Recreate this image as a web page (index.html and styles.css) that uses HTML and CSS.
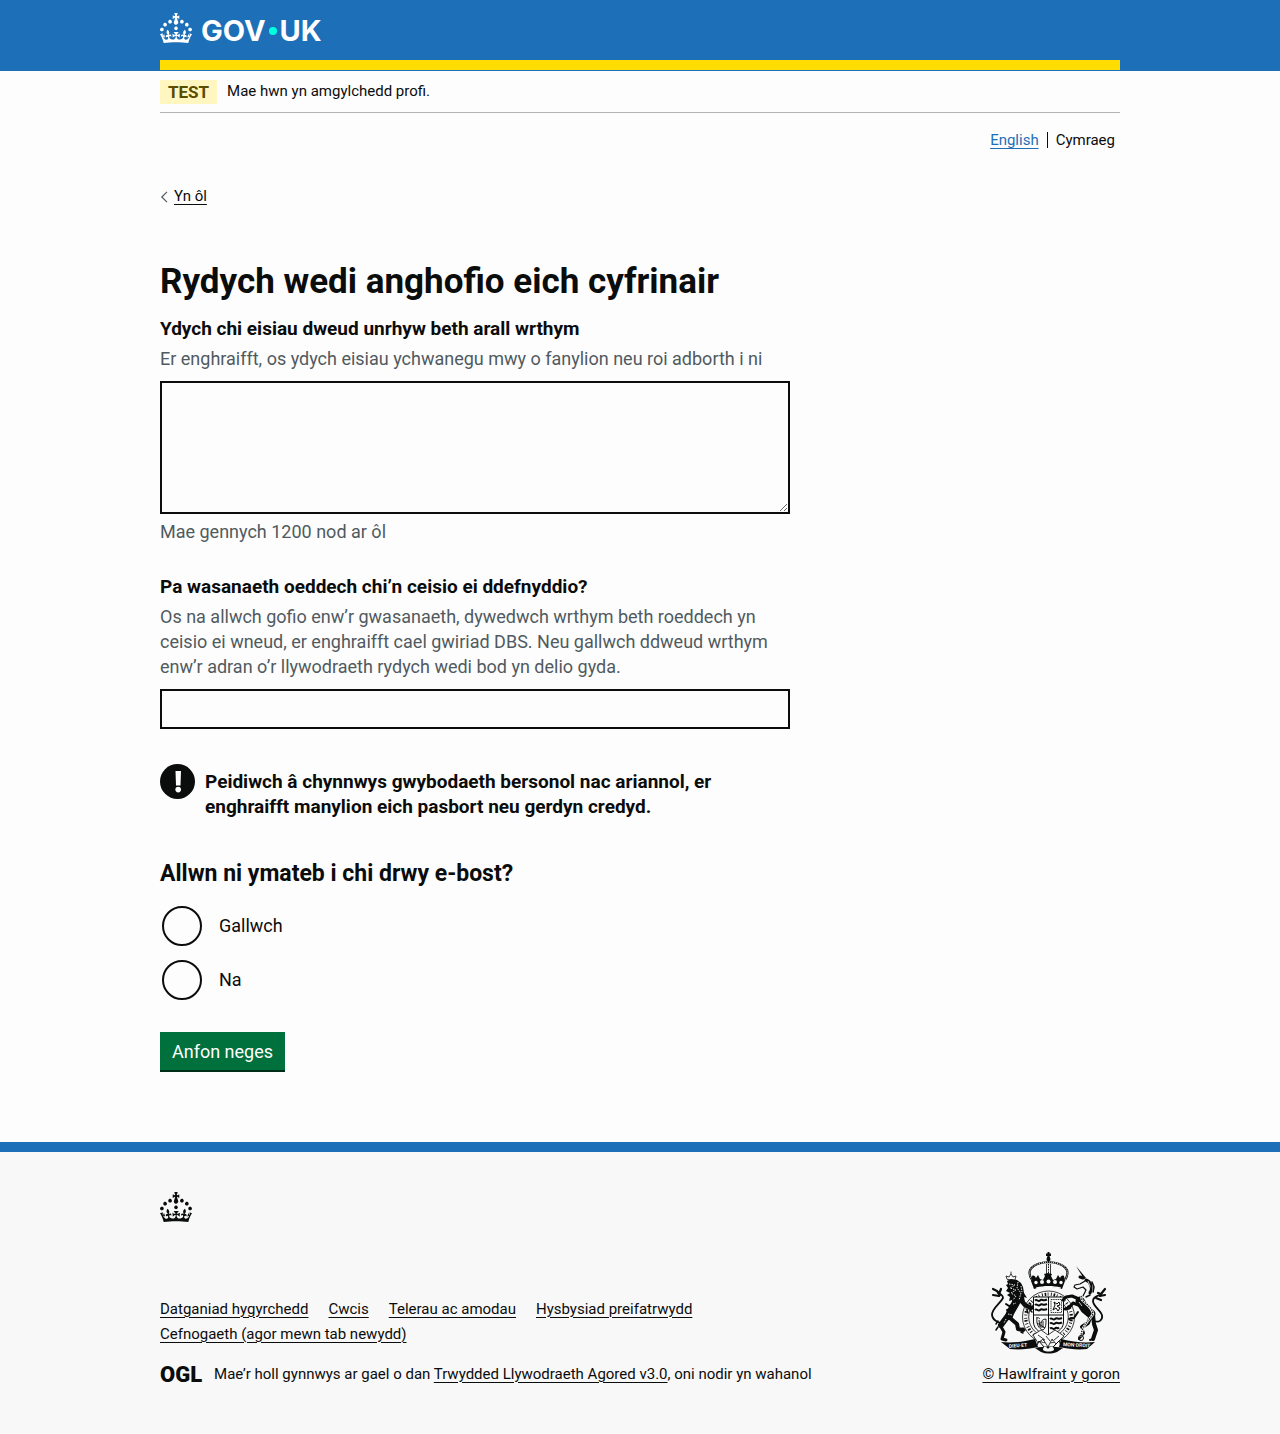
FILE: index.html
```html
<!DOCTYPE html>
<html lang="cy">
<head>
<meta charset="utf-8">
<meta name="viewport" content="width=device-width, initial-scale=1">
<title>Rydych wedi anghofio eich cyfrinair - GOV.UK</title>
<link rel="stylesheet" href="styles.css">
</head>
<body>
<svg width="0" height="0" class="sprite" aria-hidden="true">
  <symbol id="crown" viewBox="0 0 32 30">
    <path d="M22.6 10.4c-1 .4-2-.1-2.4-1-.4-.9.1-2 1-2.4.9-.4 2 .1 2.4 1s-.1 2-1 2.4m-5.9 6.7c-.9.4-2-.1-2.4-1-.4-.9.1-2 1-2.4.9-.4 2 .1 2.4 1s-.1 2-1 2.4m10.8-3.7c-1 .4-2-.1-2.4-1-.4-.9.1-2 1-2.4.9-.4 2 .1 2.4 1s0 2-1 2.4m3.3 4.8c-1 .4-2-.1-2.4-1-.4-.9.1-2 1-2.4.9-.4 2 .1 2.4 1s-.1 2-1 2.4M17 4.7l2.3 1.2V2.5l-2.3.7-.2-.2.9-3h-3.4l.9 3-.2.2c-.1.1-2.3-.7-2.3-.7v3.4L15 4.7c.1.1.1.2.2.2l-1.3 4c-.1.2-.1.4-.1.6 0 1.1.8 2 1.9 2.2h.7c1-.2 1.9-1.1 1.9-2.1 0-.2 0-.4-.1-.6l-1.3-4c-.1-.2 0-.2.1-.3m-7.6 5.7c.9.4 2-.1 2.4-1 .4-.9-.1-2-1-2.4-.9-.4-2 .1-2.4 1s0 2 1 2.4m-5 3c.9.4 2-.1 2.4-1 .4-.9-.1-2-1-2.4-.9-.4-2 .1-2.4 1s.1 2 1 2.4m-3.2 4.8c.9.4 2-.1 2.4-1 .4-.9-.1-2-1-2.4-.9-.4-2 .1-2.4 1s0 2 1 2.4m14.8 11c4.4 0 8.6.3 12.3.8 1.1-4.5 2.4-7 3.7-8.8l-2.5-.9c.2 1.3.3 1.9 0 2.7-.4-.4-.8-1.1-1.1-2.3l-1.2 4c.7-.5 1.3-.8 2-.9-1.1 2.5-2.6 3.1-3.5 3-1.1-.2-1.7-1.2-1.5-2.1.3-1.2 1.5-1.5 2.1-.1 1.1-2.3-.8-3-2-2.3 1.9-1.9 2.1-3.5.6-5.6-2.1 1.6-2.1 3.2-1.2 5.5-1.2-1.4-3.2-.6-2.5 1.6.9-1.4 2.1-.5 1.9.8-.2 1.1-1.7 2.1-3.5 1.9-2.7-.2-2.9-2.1-2.9-3.6.7-.1 1.9.5 2.9 1.9l.4-4.3c-1.1 1.1-2.1 1.4-3.2 1.4.4-1.2 2.1-3 2.1-3h-5.4s1.7 1.9 2.1 3c-1.1 0-2.1-.2-3.2-1.4l.4 4.3c1-1.4 2.2-2 2.9-1.9-.1 1.5-.2 3.4-2.9 3.6-1.9.2-3.4-.8-3.5-1.9-.2-1.3 1-2.2 1.9-.8.7-2.3-1.2-3-2.5-1.6.9-2.2.9-3.9-1.2-5.5-1.5 2-1.3 3.7.6 5.6-1.2-.7-3.1 0-2 2.3.6-1.4 1.8-1.1 2.1.1.2.9-.3 1.9-1.5 2.1-.9.2-2.4-.5-3.5-3 .6 0 1.2.3 2 .9l-1.2-4c-.3 1.1-.7 1.9-1.1 2.3-.3-.8-.2-1.4 0-2.7l-2.9.9C1.3 23 2.6 25.5 3.7 30c3.7-.5 7.9-.8 12.3-.8"/>
  </symbol>
</svg>

<header class="header">
  <div class="container">
    <a class="logo" href="#" aria-label="GOV.UK">
      <svg class="crown" aria-hidden="true"><use href="#crown"/></svg>
      <span class="logo-text">GOV<span class="logo-dot"></span>UK</span>
    </a>
    <div class="header-bar"></div>
  </div>
</header>

<div class="container">
  <div class="phase-banner">
    <strong class="tag">TEST</strong>
    <span>Mae hwn yn amgylchedd profi.</span>
  </div>
  <nav class="languages" aria-label="Iaith">
    <a href="#" lang="en">English</a>
    <span class="current" aria-current="true">Cymraeg</span>
  </nav>
  <a class="back-link" href="#"><svg width="8" height="12" viewBox="0 0 8 12" aria-hidden="true"><path d="M7 .8 1.800 6 7 11.200" fill="none" stroke="#505a5f" stroke-width="1.200"/></svg><span>Yn ôl</span></a>

  <main class="main">
    <h1>Rydych wedi anghofio eich cyfrinair</h1>
    <form>
      <div class="group">
        <label class="label" for="details">Ydych chi eisiau dweud unrhyw beth arall wrthym</label>
        <p class="hint" id="details-hint">Er enghraifft, os ydych eisiau ychwanegu mwy o fanylion neu roi adborth i ni</p>
        <textarea class="field textarea" id="details" name="details" aria-describedby="details-hint details-count"></textarea>
        <p class="count" id="details-count">Mae gennych 1200 nod ar ôl</p>
      </div>
      <div class="group">
        <label class="label" for="service">Pa wasanaeth oeddech chi’n ceisio ei ddefnyddio?</label>
        <p class="hint" id="service-hint">Os na allwch gofio enw’r gwasanaeth, dywedwch wrthym beth roeddech yn ceisio ei wneud, er enghraifft cael gwiriad DBS. Neu gallwch ddweud wrthym enw’r adran o’r llywodraeth rydych wedi bod yn delio gyda.</p>
        <input class="field" id="service" name="service" type="text" aria-describedby="service-hint">
      </div>
      <div class="warning">
        <svg width="35" height="35" viewBox="0 0 35 35" aria-hidden="true"><circle cx="17.500" cy="17.500" r="17.500" fill="#0b0c0c"/><path d="M15.500 7h5.500l-.5 14.500h-4.500z" fill="#fff"/><circle cx="18.200" cy="25.600" r="2.800" fill="#fff"/></svg>
        <strong>Peidiwch â chynnwys gwybodaeth bersonol nac ariannol, er enghraifft manylion eich pasbort neu gerdyn credyd.</strong>
      </div>
      <fieldset class="radios">
        <legend>Allwn ni ymateb i chi drwy e-bost?</legend>
        <div class="radio"><input type="radio" name="contact" id="contact-yes" value="yes"><label for="contact-yes">Gallwch</label></div>
        <div class="radio"><input type="radio" name="contact" id="contact-no" value="no"><label for="contact-no">Na</label></div>
      </fieldset>
      <button class="button" type="submit">Anfon neges</button>
    </form>
  </main>
</div>

<footer class="footer">
  <div class="container">
    <svg class="crown" aria-hidden="true"><use href="#crown"/></svg>
    <div class="footer-meta">
      <div class="footer-main">
        <ul class="footer-links">
          <li><a href="#">Datganiad hygyrchedd</a></li>
          <li><a href="#">Cwcis</a></li>
          <li><a href="#">Telerau ac amodau</a></li>
          <li><a href="#">Hysbysiad preifatrwydd</a></li>
          <li><a href="#">Cefnogaeth (agor mewn tab newydd)</a></li>
        </ul>
        <div class="licence">
          <span class="ogl" aria-hidden="true">OGL</span>
          <span>Mae’r holl gynnwys ar gael o dan <a href="#">Trwydded Llywodraeth Agored v3.0</a>, oni nodir yn wahanol</span>
        </div>
      </div>
      <a class="copyright" href="#">
        <svg class="crest" viewBox="0 0 117 102" aria-hidden="true">
          <!-- royal crown -->
          <path d="M57.500 0h2v1.500H61V4h-1.500l1 3-1 4h-2l-1-4 1-3H56V1.500h1.500z"/>
          <g fill="none" stroke="#0b0c0c">
            <path d="M42 28c-6-9-1-17 16.500-18C76 11 81 19 75 28" stroke-width="2.200"/>
            <path d="M42 28c-6-9-1-17 16.500-18C76 11 81 19 75 28" stroke="#f8f8f8" stroke-dasharray="1 1"/>
            <path d="M56.500 12v11M60.500 12v11" stroke-width=".8"/>
            <path d="M58.500 12v12" stroke-dasharray="1.500 1"/>
          </g>
          <path d="M42 24c2-1 3 0 4 2l2-3 2 4 3 1 2-4-1-2 4-1 4 1-1 2 2 4 3-1 2-4 2 3c1-2 2-3 4-2l1 5-3 8c-9-3-19-3-28 0l-3-8z"/>
          <g fill="#f8f8f8"><circle cx="46" cy="30.500" r="1.700"/><circle cx="52" cy="30" r="2"/><circle cx="58.500" cy="29.500" r="2"/><circle cx="65" cy="30" r="2"/><circle cx="71" cy="30.500" r="1.700"/><path d="M46 35.500c8-2 17-2 25 0l-.4 1.200c-8-2-16-2-24.200 0z"/></g>
          <!-- garter -->
          <circle cx="58.500" cy="65" r="26" fill="#f8f8f8" stroke="#0b0c0c" stroke-width=".8"/>
          <circle cx="58.500" cy="65" r="22.800" fill="none" stroke="#0b0c0c" stroke-width="3.200" stroke-dasharray=".9 1.800 1.600 1.500 .8 2.500"/>
          <circle cx="58.500" cy="65" r="19.800" fill="#f8f8f8" stroke="#0b0c0c" stroke-width=".8"/>
          <!-- shield -->
          <path d="M43.500 45h30v25c0 8-8 11-15 14-7-3-15-6-15-14z" fill="#f8f8f8" stroke="#0b0c0c"/>
          <path d="M58.500 45v38M43.500 63h30" stroke="#0b0c0c"/>
          <g fill="none" stroke="#0b0c0c">
            <path d="M45 48.500c2-2 3 2 5 0s3 1 7-1M45 53c2-2 3 2 5 0s3 1 7-1M45 58c2-2 3 2 5 0s3 1 7-1M60 67c2-2 3 2 5 0s3 1 7-1M60 71.500c2-2 3 2 5 0s3 1 7-1M60 76.500c2-2 3 2 5 0s2 1 4-1" stroke-width="2"/>
            <path d="M61 47.500h10.500v13H61z" stroke-width=".8" stroke-dasharray="1.500 .7"/>
            <path d="M64 50l3 2 2-2 1 3-3 1 3 2-2 3-2-3-3 2 2-5z"/>
            <path d="M46 66c2-1 3 0 4 1M47 66c-1 6 2 11 6 12 3-2 3-6 3-11-3 0-5 2-5 4M49 68l1 7M51 70v6M53 69v7M47 71l8 5" stroke-width=".9"/>
          </g>
          <!-- lion -->
          <g fill="none" stroke="#0b0c0c" stroke-linecap="round" stroke-linejoin="round">
            <path d="M17 27l-1-3 3 1 2-3 2 3 3-1-1 4zM21 22v-2" stroke-width=".8"/>
            <path d="M27 48c-2 6-6 9-8 16" stroke-width="8"/>
            <path d="M30 47l5 6 6 3" stroke-width="4.500"/>
            <path d="M40 54l3 1M40 58l2 2M37 58l1 3" stroke-width="1.500"/>
            <path d="M24 53l-5 1-3-2M22 57l-5 1" stroke-width="2"/>
            <path d="M17 65l-6 8" stroke-width="6"/>
            <path d="M10 73l4 7-2 7 4 1" stroke-width="3"/>
            <path d="M20 66l7 6 1 5 5 1" stroke-width="4"/>
            <path d="M33 76l2 2M31 80l2 1M8 69l-2 3M8 75l-2 3" stroke-width="1.500"/>
            <path d="M15 69c-4 4-12 0-13-6 0-7 8-11 11-17 0-3-2-4-5-5" stroke-width="1.800"/>
            <path d="M3 37l4 2 3 4M3 43l6 1M11 37l-2 5" stroke-width="2.200"/>
          </g>
          <path d="M17 29l4-2 6 1 4 3 2 4 1 6 3 5-3-1 1 5-4-2-1 4-4-3-3 3-1-4-3 1 1-4-3-2 3-2-4-2 2-3-2-3 2-1z"/>
          <g fill="none" stroke="#f8f8f8" stroke-width=".9" stroke-dasharray="1.500 1"><path d="M19 32l6 1-5 3 6 2-5 3 5 3-3 4M28 30l-1 6 4 5-2 7M31 34l1 6M23 52l3-1M18 62l4 1M16 67l-2 4"/></g>
          <!-- unicorn -->
          <path d="M86 14L96 26l-2 1z"/>
          <g fill="none" stroke="#0b0c0c" stroke-linecap="round" stroke-linejoin="round">
            <path d="M95 29l-5 3-5 1-1 2 3 2 6-2 3 3-3 6" stroke-width="1.200"/>
            <path d="M96 28c5 2 6 7 4 13M93 26l-3-1" stroke-width="3"/>
            <path d="M102 30l2 5-1 5M100 43l-4 2" stroke-width="1.500"/>
            <path d="M90 49l5 8 6 5" stroke-width="9"/>
            <path d="M89 47l-7-3-6 1M76 45l-3 3" stroke-width="3"/>
            <path d="M91 54l-8-3-4 5-4 1" stroke-width="3"/>
            <path d="M101 64l-3 7-6 4" stroke-width="4"/>
            <path d="M92 75l2 6-5 6" stroke-width="2"/>
            <path d="M103 63l1 9 2 6-3 9" stroke-width="4"/>
            <path d="M103 87l-3 1M88 60l-4 6-5 1" stroke-width="2"/>
            <path d="M104 69c5 2 9-1 8-6-2-5-9-9-9-14 0-4 4-5 7-6" stroke-width="1.800"/>
            <path d="M115 37l-4 5-3-1M115 43l-5 1M106 46l5 2" stroke-width="2.200"/>
          </g>
          <g fill="none">
            <path d="M91 44l1 4c5 5 10 7 11 14-5 8-12 13-12 23" stroke="#f8f8f8" stroke-width="2.400"/>
            <path d="M91 44l1 4c5 5 10 7 11 14-5 8-12 13-12 23" stroke="#0b0c0c" stroke-width="1.200" stroke-dasharray="1.500 1"/>
            <circle cx="91" cy="86" r="2.500" stroke="#0b0c0c"/>
            <path d="M98 29l2 5-1 5M89 50l3 4" stroke="#f8f8f8" stroke-width=".8"/>
          </g>
          <!-- buckle strap -->
          <path d="M43 83l8-5 7 5 7-5 9 6-8 8-4-5-4 8-5-8-5 4z" fill="#f8f8f8" stroke="#0b0c0c" stroke-width=".8"/>
          <path d="M48 83l7 5M56 84l4 5M64 88l5-4" fill="none" stroke="#0b0c0c" stroke-width=".8"/>
          <!-- motto scroll -->
          <path d="M11 90c11 1 22 0 34-3l3 8c-9 2-18 3-28 2zM71 87c12 3 22 4 34 3l-8 7c-9 1-18 0-28-2z"/>
          <path d="M45 96c9-2 19-2 28 0l-6 4c-6 2-11 2-16 0z"/>
          <path d="M53 98c0-4 3-4 5-1 2-3 6-3 6 1-3 2-8 2-11 0z" fill="#f8f8f8"/>
          <path d="M46 95l3-6 5 6M72 95l-3-6-6 6" fill="none" stroke="#0b0c0c"/>
          <g class="motto"><text x="19" y="96" transform="rotate(-5 19 96)">DIEU·ET</text><text x="73" y="94" transform="rotate(3 73 94)">MON·DROIT</text></g>
        </svg>
        <span>© Hawlfraint y goron</span>
      </a>
    </div>
  </div>
</footer>
</body>
</html>
```
FILE: styles.css
```css
* { box-sizing: border-box; }

body {
  margin: 0;
  background: #fdfdfd;
  color: #0b0c0c;
  font: 15px/25px Roboto, "Liberation Sans", sans-serif;
}

h1, p, ul, fieldset { margin: 0; padding: 0; }

a {
  color: inherit;
  text-decoration: underline;
  text-decoration-thickness: 1px;
  text-underline-offset: 3px;
}

.sprite { display: block; }

.container {
  max-width: 960px;
  margin: 0 auto;
}

.crown {
  display: block;
  width: 32px;
  height: 30px;
  fill: currentColor;
}

/* Header */
.header {
  padding-bottom: 1px;
  background: #1d70b8;
  color: #fff;
}

.logo {
  display: flex;
  align-items: center;
  gap: 9px;
  height: 60px;
  padding-bottom: 4px;
  text-decoration: none;
}

.logo-text {
  display: flex;
  align-items: center;
  padding-top: 6px;
  font: 700 29px/30px Inter, sans-serif;
}

.logo-dot {
  width: 8px;
  height: 8px;
  margin: 0 3px;
  border-radius: 50%;
  background: #00ffe0;
}

.header-bar {
  height: 10px;
  background: #ffdd00;
}

/* Phase banner and language switch */
.phase-banner {
  display: flex;
  align-items: center;
  gap: 10px;
  padding: 8px 0;
  border-bottom: 1px solid #b1b4b6;
}

.tag {
  padding: 0 8px;
  background: #fff7bf;
  color: #594d00;
  font-size: 17px;
  line-height: 24px;
}

.languages {
  display: flex;
  align-items: baseline;
  justify-content: flex-end;
  padding: 15px 5px 0 0;
}

.languages a { color: #1d70b8; }

.languages .current {
  margin-left: 8px;
  padding-left: 8px;
  border-left: 1px solid #0b0c0c;
  line-height: 16px;
}

.back-link {
  display: inline-flex;
  align-items: center;
  gap: 6px;
  margin-top: 31px;
  text-decoration: none;
}

.back-link span {
  text-decoration: underline;
  text-underline-offset: 3px;
}

/* Form */
.main {
  max-width: 630px;
  padding: 51px 0 70px;
  font-size: 18px;
}

h1 {
  margin-bottom: 14px;
  font-size: 35px;
  line-height: 40px;
}

.group { margin-bottom: 30px; }

.label {
  display: block;
  margin-bottom: 5px;
  font-size: 19px;
  font-weight: 700;
}

.hint, .count { color: #505a5f; }

.hint { margin-bottom: 10px; }

.count { margin-top: 5px; }

.field {
  display: block;
  width: 100%;
  height: 40px;
  padding: 5px;
  border: 2px solid #0b0c0c;
  border-radius: 0;
  background: #fdfdfd;
  color: inherit;
  font: inherit;
}

.textarea {
  height: 133px;
  resize: vertical;
}

.warning {
  display: flex;
  align-items: flex-start;
  gap: 10px;
  margin: 35px 0 40px;
  font-size: 19px;
}

.warning svg { flex: none; }

.warning strong { padding-top: 5px; }

.radios {
  border: 0;
  margin-bottom: 32px;
}

.radios legend {
  margin-bottom: 17px;
  padding: 0;
  font-size: 23px;
  font-weight: 700;
  line-height: 30px;
}

.radio {
  display: flex;
  align-items: center;
  gap: 17px;
  padding-left: 2px;
}

.radio + .radio { margin-top: 14px; }

.radio input {
  appearance: none;
  width: 40px;
  height: 40px;
  margin: 0;
  border: 2px solid #0b0c0c;
  border-radius: 50%;
}

.radio input:checked {
  background: radial-gradient(#0b0c0c 10px, transparent 11px);
}

.button {
  display: block;
  padding: 6px 12px 7px;
  border: 0;
  background: #00703c;
  box-shadow: inset 0 -2px 0 #002d18;
  color: #fff;
  font: inherit;
  line-height: 27px;
}

/* Footer */
.footer {
  padding: 40px 0 48px;
  border-top: 10px solid #1d70b8;
  background: #f8f8f8;
}

.footer-meta {
  display: flex;
  align-items: flex-end;
  justify-content: space-between;
  margin-top: 30px;
}

.footer-links {
  display: flex;
  flex-wrap: wrap;
  column-gap: 20px;
  max-width: 600px;
  margin-bottom: 15px;
  list-style: none;
}

.licence {
  display: flex;
  align-items: center;
  gap: 12px;
}

.ogl {
  font-size: 22px;
  font-weight: 900;
}

.copyright {
  display: flex;
  flex-direction: column;
  align-items: flex-end;
  gap: 8px;
}

.crest {
  width: 117px;
  height: 102px;
  margin-right: 13px;
  fill: #0b0c0c;
}

.motto {
  fill: #f8f8f8;
  font-size: 5px;
  font-weight: 700;
}
```
